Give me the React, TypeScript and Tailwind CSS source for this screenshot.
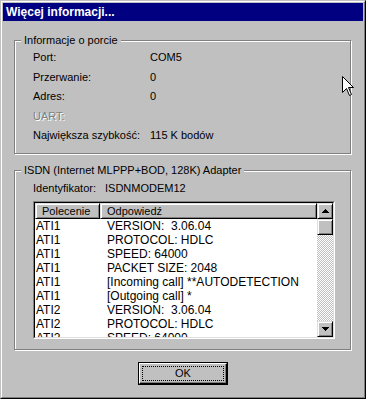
import React from 'react';

const rows: [string, string][] = [
  ['ATI1', 'VERSION:  3.06.04'],
  ['ATI1', 'PROTOCOL: HDLC'],
  ['ATI1', 'SPEED: 64000'],
  ['ATI1', 'PACKET SIZE: 2048'],
  ['ATI1', '[Incoming call] **AUTODETECTION'],
  ['ATI1', '[Outgoing call] *'],
  ['ATI2', 'VERSION:  3.06.04'],
  ['ATI2', 'PROTOCOL: HDLC'],
  ['ATI2', 'SPEED: 64000'],
];

const raised =
  'border border-t-[#dfdfdf] border-l-[#dfdfdf] border-r-black border-b-black shadow-[inset_1px_1px_0_#fff,inset_-1px_-1px_0_#808080]';

function GroupBox({
  label,
  className,
  children,
}: {
  label: string;
  className?: string;
  children: React.ReactNode;
}) {
  return (
    <div
      className={
        'relative w-[337px] border border-[#808080] shadow-[inset_1px_1px_0_#fff,1px_1px_0_#fff] ' +
        (className ?? '')
      }
    >
      <span className="absolute left-[6px] top-[-8px] bg-[#c0c0c0] px-[3px] text-[11px] leading-[14px]">
        {label}
      </span>
      {children}
    </div>
  );
}

function Arrow({ down }: { down?: boolean }) {
  return (
    <svg width="7" height="4" viewBox="0 0 7 4" className={down ? 'rotate-180' : ''}>
      <path d="M3 0h1v1h1v1h1v1h1v1H0V3h1V2h1V1h1z" fill="#000" />
    </svg>
  );
}

function Field({ label, value, disabled }: { label: string; value?: string; disabled?: boolean }) {
  return (
    <div className="flex leading-[19.5px]">
      <span
        className={
          'w-[117px] ' +
          (disabled ? 'text-[#808080] [text-shadow:1px_1px_0_#fff]' : '')
        }
      >
        {label}
      </span>
      <span>{value}</span>
    </div>
  );
}

export default function App() {
  return (
    <div className="relative h-[399px] w-[366px] border border-t-[#c0c0c0] border-l-[#c0c0c0] border-r-black border-b-black bg-[#c0c0c0] font-['Liberation_Sans',Arial,sans-serif] text-[11px] text-black">
      <div className="h-full border border-t-white border-l-white border-r-[#808080] border-b-[#808080] p-px">
        <div className="flex h-[18px] items-center bg-[#000080] pl-[3px] text-[12px] font-bold text-white">
          Więcej informacji...
        </div>

        <div className="flex flex-col pl-[11px]">
          <GroupBox label="Informacje o porcie" className="mt-[19px] h-[114px] pl-[18px] pt-[7px]">
            <Field label="Port:" value="COM5" />
            <Field label="Przerwanie:" value="0" />
            <Field label="Adres:" value="0" />
            <Field label="UART:" disabled />
            <Field label="Największa szybkość:" value="115 K bodów" />
          </GroupBox>

          <GroupBox
            label="ISDN (Internet MLPPP+BOD, 128K) Adapter"
            className="mt-[16px] h-[180px] pl-[18px] pt-[9px]"
          >
            <div className="flex leading-[16px]">
              <span className="w-[72px]">Identyfikator:</span>
              <span>ISDNMODEM12</span>
            </div>

            <div className="mt-[5px] h-[138px] w-[302px] border border-t-[#808080] border-l-[#808080] border-r-white border-b-white">
              <div className="flex h-full border border-t-black border-l-black border-r-[#dfdfdf] border-b-[#dfdfdf] bg-white">
                <div className="flex min-w-0 flex-1 flex-col overflow-hidden">
                  <div className="flex h-[16px] shrink-0 bg-[#c0c0c0] leading-[14px]">
                    <div className={'w-[65px] pl-[6px] ' + raised}>Polecenie</div>
                    <div className={'flex-1 pl-[6px] ' + raised}>Odpowiedź</div>
                  </div>
                  <div className="text-[12px] leading-[14px]">
                    {rows.map(([cmd, resp], i) => (
                      <div key={i} className="flex whitespace-pre">
                        <span className="w-[65px] pl-px">{cmd}</span>
                        <span className="pl-[7px]">{resp}</span>
                      </div>
                    ))}
                  </div>
                </div>

                <div className="flex w-[16px] shrink-0 flex-col">
                  <div className={'flex h-[16px] items-center justify-center bg-[#c0c0c0] ' + raised}>
                    <Arrow />
                  </div>
                  <div className={'h-[16px] bg-[#c0c0c0] ' + raised} />
                  <div className="flex-1 bg-[repeating-conic-gradient(#c0c0c0_0_25%,#fff_0_50%)] bg-[length:2px_2px]" />
                  <div className={'flex h-[16px] items-center justify-center bg-[#c0c0c0] ' + raised}>
                    <Arrow down />
                  </div>
                </div>
              </div>
            </div>
          </GroupBox>

          <div className="ml-[124px] mt-[12px] h-[23px] w-[90px] border border-black">
            <div className="h-full border border-t-white border-l-white border-r-black border-b-black">
              <div className="h-full p-[2px] shadow-[inset_-1px_-1px_0_#808080]">
                <div className="flex h-full items-center justify-center border border-dotted border-black">
                  OK
                </div>
              </div>
            </div>
          </div>
        </div>
      </div>

      <svg className="absolute left-[341px] top-[75px]" width="12" height="20" viewBox="0 0 12 20">
        <path
          d="M0.5 0.5V16.5L4.5 12.5L7.5 19.5L9.5 18.5L6.5 11.5H11.5Z"
          fill="#fff"
          stroke="#000"
          strokeWidth="1"
        />
      </svg>
    </div>
  );
}
